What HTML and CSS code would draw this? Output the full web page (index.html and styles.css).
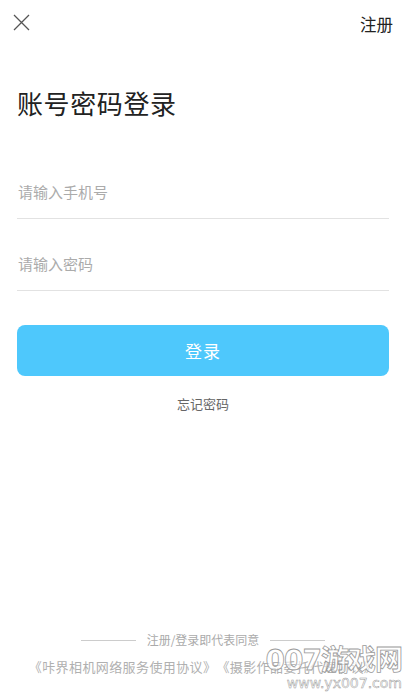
FILE: index.html
```html
<!DOCTYPE html>
<html lang="zh-CN">

<head>
    <meta charset="UTF-8" />
    <title>账号密码登录</title>
    <meta name="viewport" content="width=device-width, initial-scale=1.0" />
    <link rel="stylesheet" href="styles.css">
</head>

<body>
    <div class="page">
        <div class="top-bar">
            <a class="close-btn" href="#">
                <svg width="17" height="17" viewBox="0 0 17 17">
                    <path d="M1 1 L16 16 M16 1 L1 16" stroke="#555" stroke-width="1.3" fill="none" />
                </svg>
            </a>
            <a class="register-link" href="#">注册</a>
        </div>

        <h1 class="title">账号密码登录</h1>

        <form class="login-form">
            <div class="field">
                <input type="text" placeholder="请输入手机号" />
            </div>
            <div class="field">
                <input type="password" placeholder="请输入密码" />
            </div>
            <button type="button" class="login-btn">登录</button>
            <a class="forgot" href="#">忘记密码</a>
        </form>

        <div class="agreement">
            <div class="agree-line">
                <span class="rule"></span>
                <span>注册/登录即代表同意</span>
                <span class="rule"></span>
            </div>
            <div class="agree-links">《咔界相机网络服务使用协议》《摄影作品委托代理协议》</div>
        </div>

        <div class="watermark">
            <span class="wm-big">007游戏网</span>
            <span class="wm-small">www.yx007.com</span>
        </div>
    </div>
</body>

</html>
```

FILE: styles.css
```css
* {
    box-sizing: border-box;
}

body {
    margin: 0;
    font-family: "Noto Sans CJK SC", "Noto Sans", sans-serif;
    background: #fff;
    color: #222;
}

a {
    text-decoration: none;
}

.page {
    position: relative;
    height: 692px;
    display: flex;
    flex-direction: column;
    overflow: hidden;
}

.top-bar {
    height: 46px;
    display: flex;
    align-items: center;
    justify-content: space-between;
    padding: 0 13px 0 13px;
}

.close-btn {
    display: flex;
    width: 17px;
    height: 17px;
    margin-top: -1px;
}

.register-link {
    font-size: 16.5px;
    line-height: 24px;
    color: #222;
    margin-top: 2px;
}

.title {
    margin: 39px 0 0;
    padding: 0 17px;
    font-size: 26px;
    line-height: 36px;
    font-weight: 400;
    letter-spacing: 0.6px;
    color: #222;
}

.login-form {
    display: flex;
    flex-direction: column;
    padding: 0 17px;
    margin-top: 26px;
}

.field {
    height: 72px;
    display: flex;
    align-items: flex-end;
    padding-bottom: 15px;
    border-bottom: 1px solid #e2e2e2;
}

.field input {
    width: 100%;
    border: none;
    outline: none;
    padding: 0 0 0 1px;
    font-family: inherit;
    font-size: 15px;
    line-height: 22px;
    height: 22px;
    color: #222;
    background: transparent;
}

.field input::placeholder {
    color: #ababab;
}

.login-btn {
    margin-top: 34px;
    height: 51px;
    border: none;
    border-radius: 8px;
    background: #4ec8fc;
    color: #fff;
    font-family: inherit;
    font-size: 17px;
    letter-spacing: 1px;
    cursor: pointer;
}

.forgot {
    margin-top: 18px;
    align-self: center;
    font-size: 13px;
    line-height: 20px;
    color: #666;
}

.agreement {
    margin-top: auto;
    padding-bottom: 16px;
    display: flex;
    flex-direction: column;
    align-items: center;
    color: #aaa;
}

.agree-line {
    display: flex;
    align-items: center;
    gap: 11px;
    font-size: 12px;
    line-height: 18px;
}

.agree-line .rule {
    width: 55px;
    height: 1px;
    background: #ccc;
}

.agree-links {
    margin-top: 9px;
    font-size: 13px;
    line-height: 18px;
    letter-spacing: 0.4px;
    text-spacing-trim: space-all;
    color: #b0b0b0;
}

.watermark {
    position: absolute;
    right: 4px;
    bottom: 2px;
    display: flex;
    flex-direction: column;
    align-items: flex-end;
    font-family: "DejaVu Sans", "Noto Sans CJK SC", sans-serif;
    color: rgba(255, 255, 255, 0.6);
    -webkit-text-stroke: 0.8px #9a9a9a;
    pointer-events: none;
}

.wm-big {
    font-size: 28px;
    line-height: 30px;
    font-weight: 700;
    letter-spacing: -1px;
}

.wm-small {
    font-size: 14px;
    line-height: 14px;
    -webkit-text-stroke: 0.5px #9a9a9a;
}
```
